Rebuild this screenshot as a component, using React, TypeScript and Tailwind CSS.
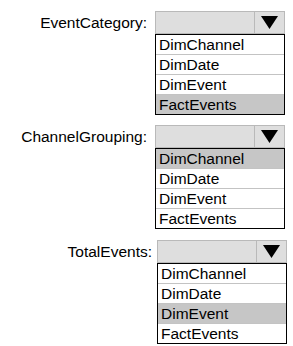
import React from "react";

const OPTIONS = ["DimChannel", "DimDate", "DimEvent", "FactEvents"];

interface DropdownProps {
  label: string;
  selected: string;
  labelWidth: string;
  gap: string;
  top: string;
}

const Dropdown: React.FC<DropdownProps> = ({ label, selected, labelWidth, gap, top }) => {
  return (
    <div className={`flex items-start ${top}`}>
      <div className={`${labelWidth} h-[23px] flex items-center justify-end text-[15.5px] text-black shrink-0`}>
        {label}
      </div>
      <div className={`w-[130px] flex flex-col ${gap}`}>
        <div className="h-[23px] flex border border-[#b9b9b9] bg-[#dedede]">
          <div className="flex-1"></div>
          <div className="w-[30px] border-l border-[#b9b9b9] flex items-center justify-center">
            <svg width="17" height="13" viewBox="0 0 17 13">
              <path d="M0 0 H17 L8.5 13 Z" fill="#000" />
            </svg>
          </div>
        </div>
        <div className="border border-black bg-white flex flex-col">
          {OPTIONS.map((opt, i) => (
            <div
              key={opt}
              className={
                "flex items-center pl-[3px] text-[15.5px] text-black leading-none " +
                (opt === selected ? "bg-[#c6c6c6]" : "bg-white") +
                (i < OPTIONS.length - 1 ? " border-b border-[#c3c3c3] h-[20px]" : " h-[19px]")
              }
            >
              {opt}
            </div>
          ))}
        </div>
      </div>
    </div>
  );
};

export default function App() {
  return (
    <div className="w-[293px] h-[346px] bg-white overflow-hidden font-['Liberation_Sans',Arial,sans-serif]">
      <div className="flex flex-col">
        <Dropdown label="EventCategory:" selected="FactEvents" labelWidth="w-[147px]" gap="ml-[8px]" top="mt-[11px]" />
        <Dropdown label="ChannelGrouping:" selected="DimChannel" labelWidth="w-[147px]" gap="ml-[8px]" top="mt-[10px]" />
        <Dropdown label="TotalEvents:" selected="DimEvent" labelWidth="w-[152px]" gap="ml-[5px]" top="mt-[11px]" />
      </div>
    </div>
  );
}
